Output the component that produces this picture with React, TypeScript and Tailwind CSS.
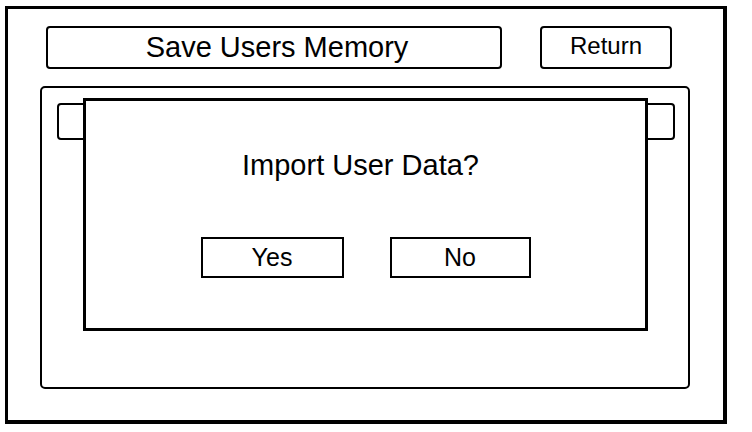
import React from 'react';

const font = { fontFamily: '"Liberation Sans", Arial, sans-serif' };

const App: React.FC = () => {
  return (
    <div className="w-[752px] h-[432px] bg-white text-black" style={font}>
      <div className="absolute left-[5px] top-[6px] w-[722px] h-[418px] border-l-[3px] border-t-[3px] border-r-4 border-b-4 border-black flex flex-col">
        {/* header row */}
        <div className="flex pt-[17px] pl-[38px] gap-[38px]">
          <div className="w-[456px] h-[43px] border-2 border-black rounded-[4px] flex items-center justify-center text-[29px] leading-none pl-[6px]">
            Save Users Memory
          </div>
          <div className="w-[132px] h-[43px] border-2 border-black rounded-[4px] flex items-center justify-center text-[24px] leading-none pb-[3px]">
            Return
          </div>
        </div>

        {/* memory panel */}
        <div className="relative ml-[32px] mt-[17px] w-[650px] h-[303px] border-2 border-black rounded-[5px] pt-[15px] pl-[15px] pr-[13px]">
          <div className="h-[37px] border-2 border-black rounded-[4px]" />

          {/* confirm dialog */}
          <div className="absolute left-[41px] top-[10px] w-[565px] h-[233px] bg-white border-[3px] border-black flex flex-col items-center">
            <div className="mt-[48px] text-[29px] leading-[32px] pr-[10px]">Import User Data?</div>
            <div className="flex gap-[46px] mt-[56px]">
              <button className="w-[143px] h-[41px] border-2 border-black flex items-center justify-center text-[25px] leading-none">
                Yes
              </button>
              <button className="w-[141px] h-[41px] border-2 border-black flex items-center justify-center text-[25px] leading-none">
                No
              </button>
            </div>
          </div>
        </div>
      </div>
    </div>
  );
};

export default App;
